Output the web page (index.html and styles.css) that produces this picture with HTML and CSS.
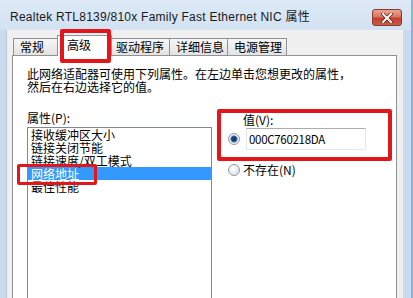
FILE: index.html
```html
<!DOCTYPE html>
<html lang="zh-CN">

<head>
    <meta charset="UTF-8">
    <meta name="viewport" content="width=device-width, initial-scale=1.0">
    <title>网卡属性</title>
    <link rel="stylesheet" href="styles.css">
</head>

<body>
    <div class="window">
        <div class="titlebar">
            <span class="title">Realtek RTL8139/810x Family Fast Ethernet NIC 属性</span>
            <span class="close">
                <svg width="12" height="10" viewBox="0 0 12 10">
                    <path d="M2 1 L10 9 M10 1 L2 9" stroke="#5a1a12" stroke-width="3.4" stroke-linecap="square"/>
                    <path d="M2 1 L10 9 M10 1 L2 9" stroke="#ffffff" stroke-width="2" stroke-linecap="square"/>
                </svg>
            </span>
        </div>

        <div class="client">
            <div class="tabs">
                <div class="tab tab-1">常规</div>
                <div class="tab tab-2 active">高级</div>
                <div class="tab tab-3">驱动程序</div>
                <div class="tab tab-4">详细信息</div>
                <div class="tab tab-5">电源管理</div>
            </div>

            <div class="page">
                <p class="intro">此网络适配器可使用下列属性。在左边单击您想更改的属性，<br>然后在右边选择它的值。</p>

                <div class="columns">
                    <div class="props">
                        <div class="label">属性(P):</div>
                        <ul class="listbox">
                            <li>接收缓冲区大小</li>
                            <li>链接关闭节能</li>
                            <li>链接速度/双工模式</li>
                            <li class="selected">网络地址</li>
                            <li>最佳性能</li>
                        </ul>
                    </div>

                    <div class="values">
                        <div class="label value-label">值(V):</div>
                        <div class="radio-row">
                            <span class="radio checked"></span>
                            <div class="textbox">000C760218DA</div>
                        </div>
                        <div class="radio-row second">
                            <span class="radio"></span>
                            <span class="radio-text">不存在(N)</span>
                        </div>
                    </div>
                </div>
            </div>
        </div>

        <!-- red annotation boxes -->
        <div class="mark mark-tab"></div>
        <div class="mark mark-item"></div>
        <div class="mark mark-value"></div>
    </div>
</body>

</html>
```

FILE: styles.css
```css
body {
    margin: 0;
    width: 413px;
    height: 298px;
    overflow: hidden;
    font-family: "Noto Sans CJK SC", "Liberation Sans", sans-serif;
    font-size: 12px;
    color: #000;
}

.window {
    position: relative;
    width: 413px;
    height: 298px;
    background: #c9dbef;
    border-right: 2px solid #8eb2d6;
    box-sizing: border-box;
    overflow: hidden;
}

/* Title bar */
.titlebar {
    height: 30px;
    display: flex;
    justify-content: space-between;
    padding: 0 9px 0 10px;
    background: linear-gradient(to bottom, #dde9f6, #d2e2f2);
}

.title {
    font-family: "Liberation Sans", Arial, "Noto Sans CJK SC", sans-serif;
    font-size: 12px;
    letter-spacing: 0.25px;
    padding-top: 9px;
    line-height: 16px;
    color: #1a1a1a;
}

.close {
    margin-top: 9px;
    width: 30px;
    height: 17px;
    box-sizing: border-box;
    border: 1px solid #8d3a2e;
    border-radius: 3px;
    background: linear-gradient(to bottom, #e9a596 0%, #d9735f 45%, #c2412c 55%, #c85a45 100%);
    display: flex;
    align-items: center;
    justify-content: center;
}

/* Client area */
.client {
    margin: 0 8px 0 6px;
    height: 268px;
    background: #f0f0f0;
    padding: 5px 0 0 0;
    box-sizing: border-box;
    border-left: 1px solid #b9c9da;
    overflow: hidden;
}

.tabs {
    display: flex;
    align-items: flex-end;
    height: 20px;
    padding-left: 6px;
}

.tab {
    height: 17px;
    box-sizing: border-box;
    border: 1px solid #8e9196;
    border-bottom: none;
    margin-left: -1px;
    padding-left: 6px;
    line-height: 16px;
    background: linear-gradient(to bottom, #f6f6f6, #e3e3e3);
    white-space: nowrap;
}

.tab-1 { width: 47px; margin-left: 0; }
.tab-2 { width: 52px; }
.tab-3 { width: 61px; }
.tab-4 { width: 59px; }
.tab-5 { width: 60px; }

.tab.active {
    height: 21px;
    width: 55px;
    margin: 0 -2px -1px -3px;
    padding-left: 9px;
    line-height: 17px;
    background: #fff;
    position: relative;
}

/* Tab page */
.page {
    margin: 0 6px 0 5px;
    height: 260px;
    border: 1px solid #8e9196;
    background: #fff;
    padding: 11px 0 0 14px;
}

.intro {
    margin: 0;
    line-height: 13px;
}

.columns {
    display: flex;
    margin-top: 18px;
}

.props {
    width: 185px;
}

.label {
    line-height: 13px;
}

.listbox {
    list-style-type: none;
    margin: 3px 0 0 0;
    padding: 0;
    height: 200px;
    border: 1px solid #828790;
}

.listbox li {
    height: 13px;
    line-height: 13px;
    padding-left: 3px;
    white-space: nowrap;
}

.listbox li.selected {
    background-color: #3399ff;
    color: #fff;
}

.values {
    margin-left: 16px;
    padding-top: 2px;
}

.value-label {
    padding-left: 15px;
}

.radio-row {
    display: flex;
    align-items: center;
    margin-top: 2px;
}

.radio-row.second {
    margin-top: 11px;
}

.radio {
    width: 12px;
    height: 12px;
    box-sizing: border-box;
    border-radius: 50%;
    border: 1px solid #8f9aa6;
    background: radial-gradient(circle at 40% 35%, #ffffff, #d6d9de);
    margin-right: 6px;
}

.radio.checked {
    background: radial-gradient(circle, #123c73 0 2px, #3d6ea6 3px, #f2f4f7 4px, #d9dde2 100%);
}

.radio-row.second .radio {
    margin-right: 3px;
}

.textbox {
    width: 120px;
    height: 22px;
    box-sizing: border-box;
    border: 1px solid #e3e9ef;
    border-top-color: #abadb3;
    padding-left: 2px;
    line-height: 20px;
    font-size: 11.5px;
    letter-spacing: -0.3px;
}

/* Red annotation boxes */
.mark {
    position: absolute;
    box-sizing: border-box;
    border: 4px solid #e5151c;
    border-radius: 2px;
}

.mark-tab {
    left: 60px;
    top: 29px;
    width: 51px;
    height: 34px;
}

.mark-item {
    left: 17px;
    top: 164px;
    width: 80px;
    height: 21px;
    border-width: 3px;
}

.mark-value {
    left: 217px;
    top: 109px;
    width: 175px;
    height: 52px;
}
```
